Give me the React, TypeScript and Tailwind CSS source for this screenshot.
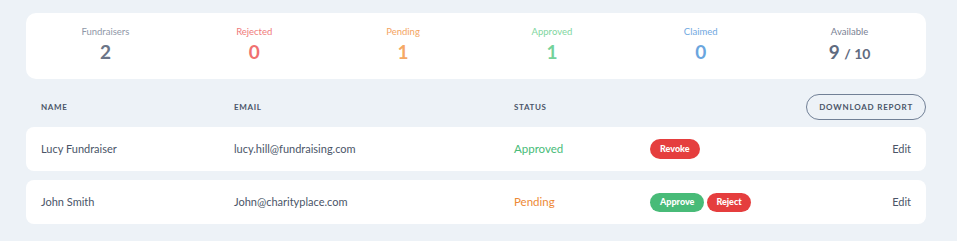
export default function App() {
  const stats = [
    { label: "Fundraisers", value: "2", labelColor: "text-[#8f98a8]", valueColor: "text-[#6b7588]" },
    { label: "Rejected", value: "0", labelColor: "text-[#f07b7b]", valueColor: "text-[#f07070]" },
    { label: "Pending", value: "1", labelColor: "text-[#f4a462]", valueColor: "text-[#f5a865]" },
    { label: "Approved", value: "1", labelColor: "text-[#7fd6a0]", valueColor: "text-[#74d29a]" },
    { label: "Claimed", value: "0", labelColor: "text-[#6fa8df]", valueColor: "text-[#6aa5de]" },
  ];

  const rows = [
    { name: "Lucy Fundraiser", email: "lucy.hill@fundraising.com", status: "Approved" },
    { name: "John Smith", email: "John@charityplace.com", status: "Pending" },
  ];

  return (
    <div className="min-h-[241px] bg-[#edf2f7] pl-[26px] pr-[31px] pt-[13px] pb-[18px] font-['Lato',sans-serif] text-[#4a5568]">
      {/* Summary counters */}
      <div className="grid grid-cols-6 rounded-[10px] bg-white pl-[5px] pr-[2px] pt-[13px] pb-[13px]">
        {stats.map((s) => (
          <div key={s.label} className="flex flex-col items-center">
            <span className={`text-[9.5px] leading-[12px] ${s.labelColor}`}>{s.label}</span>
            <span className={`mt-[2px] text-[19px] font-bold leading-[24px] ${s.valueColor}`}>{s.value}</span>
          </div>
        ))}
        <div className="flex flex-col items-center">
          <span className="text-[9.5px] leading-[12px] text-[#7a8294]">Available</span>
          <span className="mt-[2px] text-[19px] font-bold leading-[24px] text-[#5f6b7f]">
            9 <span className="text-[14px]">/ 10</span>
          </span>
        </div>
      </div>

      {/* Table header */}
      <div className="mt-[15px] flex h-[26px] items-center pl-[15px] text-[8px] font-bold uppercase tracking-[0.08em] text-[#4a5568]">
        <div className="w-[193px]">Name</div>
        <div className="w-[280px]">Email</div>
        <div className="flex-1">Status</div>
        <button className="h-[26px] rounded-full border border-[#718096] px-[12px] text-[8px] font-bold uppercase tracking-[0.1em] text-[#4a5568]">
          Download Report
        </button>
      </div>

      {/* Rows */}
      <div className="mt-[7px] flex flex-col gap-[9px]">
        {rows.map((r) => (
          <div key={r.name} className="flex h-[44px] items-center rounded-[8px] bg-white pl-[15px] pr-[15px] text-[11px]">
            <div className="w-[193px]">{r.name}</div>
            <div className="w-[280px]">{r.email}</div>
            <div className={`w-[136px] text-[11.5px] ${r.status === "Approved" ? "text-[#48bb78]" : "text-[#ed8936]"}`}>
              {r.status}
            </div>
            <div className="flex flex-1 gap-[3px]">
              {r.status === "Approved" ? (
                <span className="flex h-[20px] items-center rounded-full bg-[#e53e3e] px-[10px] text-[9px] font-black text-white">
                  Revoke
                </span>
              ) : (
                <>
                  <span className="flex h-[19px] items-center rounded-full bg-[#48bb78] px-[10px] text-[9px] font-black text-white">
                    Approve
                  </span>
                  <span className="flex h-[19px] items-center rounded-full bg-[#e53e3e] px-[9px] text-[9px] font-black text-white">
                    Reject
                  </span>
                </>
              )}
            </div>
            <div>Edit</div>
          </div>
        ))}
      </div>
    </div>
  );
}
